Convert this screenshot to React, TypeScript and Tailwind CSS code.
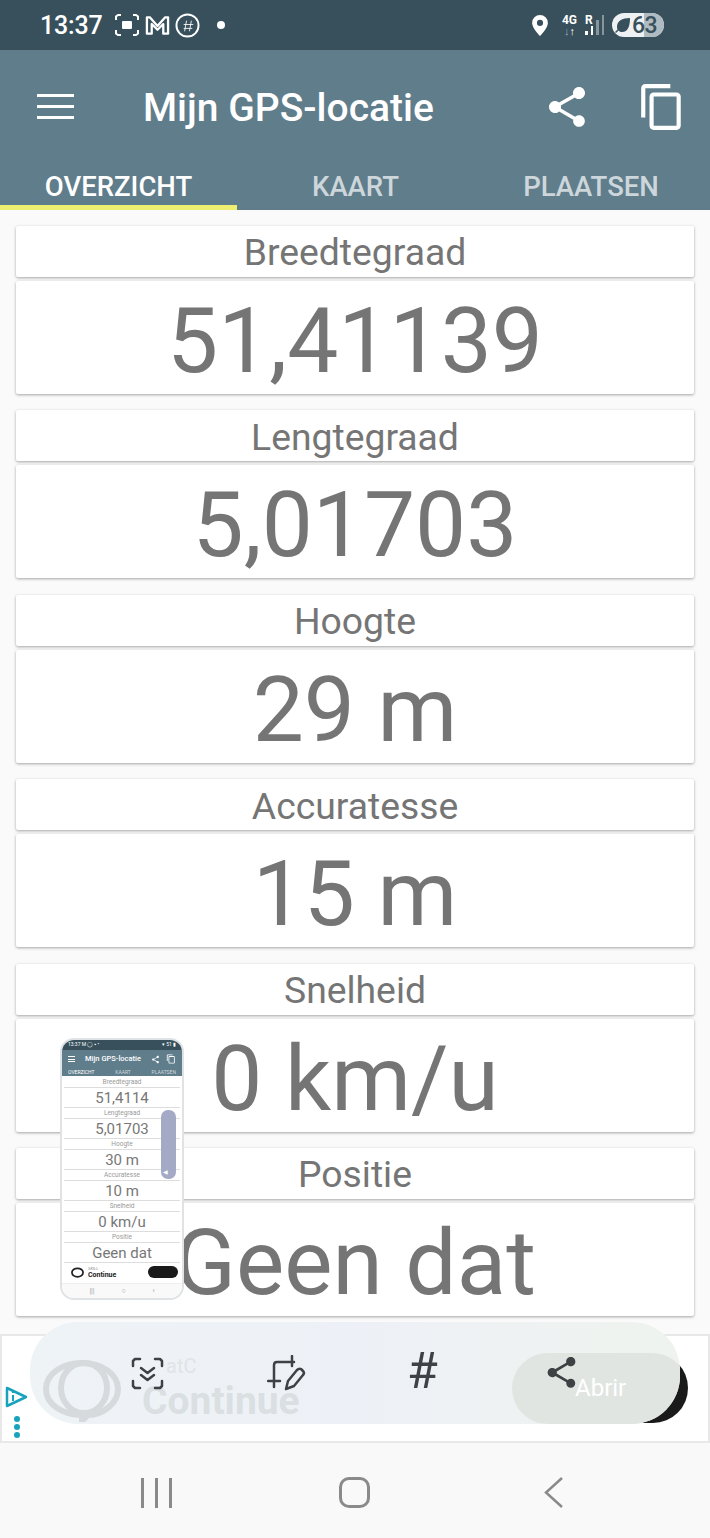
const rows = [
  { label: "Breedtegraad", value: "51,41139" },
  { label: "Lengtegraad", value: "5,01703" },
  { label: "Hoogte", value: "29 m" },
  { label: "Accuratesse", value: "15 m" },
  { label: "Snelheid", value: "0 km/u" },
  { label: "Positie", value: "Geen dat" },
];

const miniRows = [
  { label: "Breedtegraad", value: "51,4114" },
  { label: "Lengtegraad", value: "5,01703" },
  { label: "Hoogte", value: "30 m" },
  { label: "Accuratesse", value: "10 m" },
  { label: "Snelheid", value: "0 km/u" },
  { label: "Positie", value: "Geen dat" },
];

const ShareIcon = ({ className }: { className: string }) => (
  <svg viewBox="0 0 24 24" className={className} fill="currentColor">
    <path d="M18 16.08c-.76 0-1.44.3-1.96.77L8.91 12.7c.05-.23.09-.46.09-.7s-.04-.47-.09-.7l7.05-4.11c.54.5 1.25.81 2.04.81 1.66 0 3-1.34 3-3s-1.34-3-3-3-3 1.34-3 3c0 .24.04.47.09.7L8.04 9.81C7.5 9.31 6.79 9 6 9c-1.66 0-3 1.34-3 3s1.34 3 3 3c.79 0 1.5-.31 2.04-.81l7.12 4.16c-.05.21-.08.43-.08.65 0 1.61 1.31 2.92 2.92 2.92s2.92-1.31 2.92-2.92-1.31-2.92-2.92-2.92z" />
  </svg>
);

const CopyIcon = ({ className }: { className: string }) => (
  <svg viewBox="0 0 24 24" className={className} fill="currentColor">
    <path d="M16 1H4c-1.1 0-2 .9-2 2v14h2V3h12V1zm3 4H8c-1.1 0-2 .9-2 2v14c0 1.1.9 2 2 2h11c1.1 0 2-.9 2-2V7c0-1.1-.9-2-2-2zm0 16H8V7h11v14z" />
  </svg>
);

const StatusBar = () => (
  <div className="flex h-[50px] items-center justify-between bg-[#37505c] pl-[40px] pr-[46px] text-white">
    <div className="flex items-center">
      <span className="text-[25px] font-medium leading-none tracking-[-0.2px]">13:37</span>
      <svg viewBox="0 0 26 24" className="ml-[12px] h-[24px] w-[26px]" fill="none" stroke="currentColor" strokeWidth="2">
        <path d="M2 7V3.500L4 2h3M19 2h3l2 1.500V7M24 17v3.500L22 22h-3M7 22H4l-2-1.500V17" />
        <rect x="8" y="8" width="10" height="8" fill="currentColor" stroke="none" rx="1" />
      </svg>
      <svg viewBox="0 0 26 22" className="ml-[5px] h-[22px] w-[25px]" fill="none" stroke="currentColor" strokeWidth="2.400">
        <path d="M2 20V3h3l8 9 8-9h3v17h-5V10l-6 6-6-6v10z" strokeLinejoin="round" />
      </svg>
      <svg viewBox="0 0 26 26" className="ml-[5px] h-[25px] w-[25px]" fill="none" stroke="currentColor">
        <circle cx="13" cy="13" r="11.500" strokeWidth="2" />
        <path d="M9 12h10M9 16h9M12 8l-2 11M17 8l-2 11" strokeWidth="0.900" />
      </svg>
      <span className="ml-[17px] h-[8px] w-[8px] rounded-full bg-white" />
    </div>
    <div className="flex items-center">
      <svg viewBox="0 0 18 24" className="h-[21px] w-[16px]" fill="currentColor">
        <path fillRule="evenodd" d="M9 0a9 9 0 0 1 9 9c0 6-9 15-9 15S0 15 0 9a9 9 0 0 1 9-9zm0 5.500a3.500 3.500 0 1 0 0 7 3.500 3.500 0 0 0 0-7z" />
      </svg>
      <div className="ml-[13px] flex w-[17px] flex-col items-center">
        <span className="text-[12px] font-bold leading-[13px]">4G</span>
        <span className="text-[11px] font-bold leading-[10px]">
          <span className="text-white/50">↓</span>↑
        </span>
      </div>
      <div className="relative ml-[7px] h-[20px] w-[20px]">
        <span className="absolute left-0 top-[-1px] text-[12px] font-bold leading-[12px]">R</span>
        <div className="flex h-full items-end gap-[3px]">
          <span className="h-[4px] w-[2.500px] bg-white" />
          <span className="h-[9px] w-[2.500px] bg-white" />
          <span className="h-[15px] w-[2.500px] bg-white/40" />
          <span className="h-[20px] w-[2.500px] bg-white/40" />
        </div>
      </div>
      <div className="relative ml-[7px] flex h-[24px] w-[52px] items-center overflow-hidden rounded-full bg-[#eef1f3] pl-[3px] text-[#37505c]">
        <span className="absolute inset-y-0 right-0 w-[20px] bg-[#b0bbc1]" />
        <svg viewBox="0 0 16 16" className="relative h-[16px] w-[16px]" fill="currentColor">
          <path d="M15 1C7 1 2 4 2 10c0 1 .2 1.800.5 2.500L0 15l1 1 2.500-2.500C4.500 14.500 6 15 7 15c6 0 8-6 8-14z" />
        </svg>
        <span className="relative ml-[1px] text-[23px] font-medium leading-none tracking-[-0.5px]">63</span>
      </div>
    </div>
  </div>
);

const AppBar = () => (
  <div className="bg-[#607d8b]">
    <div className="flex h-[113px] items-center pl-[37px] pr-[23px] text-white">
      <div className="flex w-[37px] flex-col gap-[7.500px]">
        <span className="h-[3.500px] bg-white" />
        <span className="h-[3.500px] bg-white" />
        <span className="h-[3.500px] bg-white" />
      </div>
      <span className="ml-[69px] pt-[3px] text-[39px] font-medium leading-none">Mijn GPS-locatie</span>
      <ShareIcon className="ml-auto h-[48px] w-[48px]" />
      <CopyIcon className="ml-[46px] h-[50px] w-[50px]" />
    </div>
    <div className="flex h-[47px]">
      <div className="flex w-[237px] justify-center border-b-[5px] border-[#eeee70] pt-[10px] text-[27.500px] font-medium leading-none text-white">
        OVERZICHT
      </div>
      <div className="flex w-[237px] justify-center pt-[10px] text-[27.500px] font-medium leading-none text-white/70">
        KAART
      </div>
      <div className="flex w-[234px] justify-center pt-[10px] text-[27.500px] font-medium leading-none text-white/70">
        PLAATSEN
      </div>
    </div>
  </div>
);

const ValueCard = ({ label, value }: { label: string; value: string }) => (
  <div className="flex flex-col gap-[4px]">
    <div className="flex h-[51px] items-center justify-center rounded-[2px] bg-white pt-[3px] text-[37.300px] leading-none text-[#757575] shadow-[0_1px_3px_rgba(0,0,0,0.35)]">
      {label}
    </div>
    <div className="flex h-[113px] items-center justify-center rounded-[2px] bg-white pt-[8px] text-[91px] leading-none whitespace-nowrap text-[#757575] shadow-[0_1px_3px_rgba(0,0,0,0.35)]">
      {value}
    </div>
  </div>
);

const Thumbnail = () => (
  <div className="absolute left-[60px] top-[1038px] flex h-[262px] w-[124px] flex-col overflow-hidden rounded-[14px] border-[2px] border-[#dfe3e5] bg-white">
    <div className="flex h-[10px] items-center justify-between bg-[#37505c] px-[6px] text-[5px] text-white">
      <span>13:37 M ◯ ▪ •</span>
      <span>▾ 51 ▮</span>
    </div>
    <div className="flex h-[18px] items-center bg-[#607d8b] px-[6px] text-white">
      <div className="flex w-[7px] flex-col gap-[1.500px]">
        <span className="h-[1px] bg-white" />
        <span className="h-[1px] bg-white" />
        <span className="h-[1px] bg-white" />
      </div>
      <span className="ml-[10px] text-[7.500px] font-medium leading-none">Mijn GPS-locatie</span>
      <ShareIcon className="ml-auto h-[9px] w-[9px]" />
      <CopyIcon className="ml-[6px] h-[10px] w-[10px]" />
    </div>
    <div className="flex h-[8px] justify-between bg-[#607d8b] px-[6px] text-[5px] leading-[8px] text-white/70">
      <span className="text-white">OVERZICHT</span>
      <span>KAART</span>
      <span>PLAATSEN</span>
    </div>
    <div className="flex flex-col px-[2px] pt-[1px]">
      {miniRows.map((r) => (
        <div key={r.label} className="flex h-[31px] flex-col items-center border-b border-[#dddddd] text-[#777777]">
          <span className="h-[11px] w-full border-b border-[#dddddd] text-center text-[6.500px] leading-[11px] text-[#999999]">{r.label}</span>
          <span className="text-[15px] leading-[20px]">{r.value}</span>
        </div>
      ))}
    </div>
    <div className="flex h-[20px] items-center pl-[8px] pr-[4px]">
      <svg viewBox="0 0 16 14" className="h-[12px] w-[15px]" fill="none" stroke="#222222" strokeWidth="2">
        <ellipse cx="8" cy="6.500" rx="6.500" ry="5" />
      </svg>
      <div className="ml-[3px] flex flex-col">
        <span className="text-[4px] leading-[4px] text-[#888888]">SKILL</span>
        <span className="text-[7px] font-bold leading-[8px] text-[#222222]">Continue</span>
      </div>
      <span className="ml-auto mt-[-2px] h-[12px] w-[30px] rounded-full bg-[#1a1a1a]" />
    </div>
    <div className="flex flex-1 items-center justify-around border-t border-[#eeeeee] bg-[#f9f9f9] px-[14px] text-[7px] leading-none text-[#999999]">
      <span>|||</span>
      <span>○</span>
      <span>‹</span>
    </div>
    <div className="absolute left-[99px] top-[70px] flex h-[69px] w-[15px] items-end justify-start rounded-[7px] bg-[#a4a9c6] pb-[3px] pl-[2px] text-[6px] text-white">
      ◀
    </div>
  </div>
);

const AdBanner = () => (
  <div className="relative mt-[18px] h-[109px] border-[2px] border-[#e8e8e8] bg-white">
    <svg viewBox="0 0 23 22" className="absolute left-[3px] top-[50px] h-[22px] w-[23px] text-[#16a3bb]" fill="none" stroke="currentColor" strokeWidth="2.500">
      <path d="M2 2l19 9L2 20z" strokeLinejoin="round" />
      <path d="M8 9v6M8 5v2" strokeWidth="2" />
    </svg>
    <div className="absolute left-[12px] top-[80px] flex flex-col gap-[2px]">
      <span className="h-[6px] w-[6px] rounded-full bg-[#16a3bb]" />
      <span className="h-[6px] w-[6px] rounded-full bg-[#16a3bb]" />
      <span className="h-[6px] w-[6px] rounded-full bg-[#16a3bb]" />
    </div>
    <div className="absolute right-[20px] top-[17px] h-[70px] w-[176px] rounded-[35px] bg-[#1a1a1a]" />
  </div>
);

const SmartSelectBar = () => (
  <div className="absolute left-[30px] top-[1322px] h-[102px] w-[650px] overflow-hidden rounded-[48px] bg-gradient-to-r from-[#eef3f6] via-[#edf1f7] to-[#eff3ee]">
    <svg viewBox="0 0 78 62" className="absolute left-[13px] top-[38px] h-[62px] w-[78px]" fill="none" stroke="#d6dadc" strokeWidth="6">
      <path d="M39 3c20 0 36 11 36 26S59 55 45 55l-6 6V55C19 55 3 44 3 29S19 3 39 3z" />
      <ellipse cx="41" cy="28" rx="23" ry="25" />
    </svg>
    <span className="absolute left-[136px] top-[34px] text-[20px] leading-none text-[#e0e4e6]">atC</span>
    <span className="absolute left-[112px] top-[60px] text-[39px] font-bold leading-none text-[#dadfe2]">Continue</span>

    <svg viewBox="0 0 33 33" className="absolute left-[101px] top-[35px] h-[33px] w-[33px]" fill="none" stroke="#3f4244" strokeWidth="2.500" strokeLinecap="round" strokeLinejoin="round">
      <path d="M2 9V4l2-2h5M24 2h5l2 2v5M31 24v5l-2 2h-5M9 31H4l-2-2v-5" />
      <path d="M10 11l6.500 5 6.500-5M10 18l6.500 5 6.500-5" />
    </svg>
    <svg viewBox="0 0 39 36" className="absolute left-[237px] top-[33px] h-[36px] w-[39px]" fill="none" stroke="#3f4244" strokeWidth="2.500" strokeLinecap="round" strokeLinejoin="round">
      <path d="M1 26h12M7 32V10q0-3 3-3h17M25 1v10" />
      <path d="M19 34l2-8 9-11q2-2 4-1l2 2q2 2 0 4l-9 11z" />
    </svg>
    <span className="absolute left-[377px] top-[24px] text-[50px] leading-none text-[#3f4244]">#</span>
    <div className="absolute right-[-8px] top-[31px] h-[71px] w-[176px] rounded-[36px] bg-[#e1e5e2]">
      <span className="absolute left-[63px] top-[23px] text-[24px] leading-none text-white">Abrir</span>
      <ShareIcon className="absolute left-[31px] top-[1px] h-[37px] w-[37px] text-[#3f4244]" />
    </div>
  </div>
);

const NavBar = () => (
  <div className="grid flex-1 grid-cols-3 items-center bg-[#f9f9f9] px-[57px] pt-[5px] text-[#8a8a8a]">
    <div className="flex justify-center gap-[11px]">
      <span className="h-[30px] w-[3px] bg-[#8a8a8a]" />
      <span className="h-[30px] w-[3px] bg-[#8a8a8a]" />
      <span className="h-[30px] w-[3px] bg-[#8a8a8a]" />
    </div>
    <div className="flex justify-center">
      <span className="h-[31px] w-[31px] rounded-[10px] border-[3px] border-[#8a8a8a]" />
    </div>
    <div className="flex justify-center">
      <svg viewBox="0 0 19 31" className="h-[31px] w-[19px]" fill="none" stroke="currentColor" strokeWidth="2.500">
        <path d="M18 1L2 15.500 18 30" />
      </svg>
    </div>
  </div>
);

export default function App() {
  return (
    <div className="relative flex h-[1538px] w-[710px] flex-col overflow-hidden bg-[#fafafa] font-['Roboto',sans-serif]">
      <StatusBar />
      <AppBar />
      <div className="flex flex-col gap-[16.400px] px-[16px] pt-[16px]">
        {rows.map((r) => (
          <ValueCard key={r.label} label={r.label} value={r.value} />
        ))}
      </div>
      <AdBanner />
      <NavBar />
      <Thumbnail />
      <SmartSelectBar />
    </div>
  );
}
